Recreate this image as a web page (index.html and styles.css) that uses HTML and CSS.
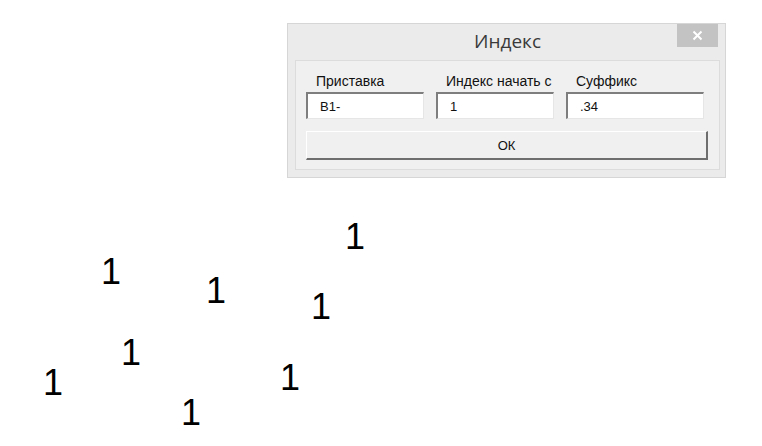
FILE: index.html
```html
<!DOCTYPE html>
<html lang="ru">
<head>
  <meta charset="UTF-8">
  <title>Индекс</title>
  <link rel="stylesheet" href="styles.css">
</head>
<body>
  <div class="sheet">
    <div class="dialog">
      <div class="titlebar">
        <span class="title">Индекс</span>
        <button class="close" title="Закрыть">
          <svg width="11" height="11" viewBox="0 0 11 11">
            <path d="M1.5 1.5 L9.5 9.5 M9.5 1.5 L1.5 9.5" stroke="#fff" stroke-width="2" fill="none"/>
          </svg>
        </button>
      </div>
      <div class="panel">
        <div class="fields">
          <div class="field">
            <label>Приставка</label>
            <input type="text" class="box" value="B1-">
          </div>
          <div class="field">
            <label>Индекс начать с</label>
            <input type="text" class="box" value="1">
          </div>
          <div class="field">
            <label>Суффикс</label>
            <input type="text" class="box" value=".34">
          </div>
        </div>
        <button class="ok">ОК</button>
      </div>
    </div>

    <span class="num" style="left: 345px; top: 219px">1</span>
    <span class="num" style="left: 101px; top: 254px">1</span>
    <span class="num" style="left: 206px; top: 273px">1</span>
    <span class="num" style="left: 311px; top: 289px">1</span>
    <span class="num" style="left: 121px; top: 335px">1</span>
    <span class="num" style="left: 43px; top: 365px">1</span>
    <span class="num" style="left: 280px; top: 360px">1</span>
    <span class="num" style="left: 181px; top: 395px">1</span>
  </div>
</body>
</html>
```

FILE: styles.css
```css
body {
  margin: 0;
  background: #fff;
  font-family: "Liberation Sans", Arial, sans-serif;
}

.sheet {
  position: relative;
  width: 762px;
  height: 446px;
  overflow: hidden;
}

.dialog {
  margin: 23px 0 0 287px;
  width: 439px;
  box-sizing: border-box;
  border: 1px solid #d6d6d6;
  background: #ebebeb;
  padding: 0 5px 7px 7px;
}

.titlebar {
  position: relative;
  height: 36px;
  display: flex;
  align-items: center;
  justify-content: center;
}

.title {
  font-family: "Open Sans", "Noto Sans", sans-serif;
  font-size: 19px;
  color: #3a3a3a;
  margin-top: -2px;
}

.close {
  position: absolute;
  top: 0;
  right: 2px;
  width: 41px;
  height: 23px;
  border: none;
  padding: 0;
  background: #c3c3c3;
  display: flex;
  align-items: center;
  justify-content: center;
}

.panel {
  border: 1px solid #dcdcdc;
  background: #f0f0f0;
  padding: 12px 11px 9px 10px;
}

.fields {
  display: grid;
  grid-template-columns: 118px 118px 138px;
  column-gap: 12px;
}

.field label {
  display: block;
  font-size: 14px;
  line-height: 17px;
  color: #111;
  padding-left: 10px;
  margin-bottom: 2px;
}

.box {
  display: block;
  width: 100%;
  height: 27px;
  box-sizing: border-box;
  margin: 0;
  padding: 0 0 0 12px;
  font-family: "Liberation Sans", Arial, sans-serif;
  font-size: 13px;
  color: #111;
  background: #fff;
  border-style: solid;
  border-width: 2px 1px 1px 2px;
  border-color: #7e7e7e #e6e6e6 #e6e6e6 #7e7e7e;
  outline: none;
}

.ok {
  display: block;
  width: 402px;
  height: 29px;
  margin-top: 12px;
  box-sizing: border-box;
  font-family: "Liberation Sans", Arial, sans-serif;
  font-size: 13px;
  color: #111;
  background: #f0f0f0;
  border-style: solid;
  border-width: 1px 2px 2px 1px;
  border-color: #fff #6e6e6e #6e6e6e #fff;
  padding: 0;
}

.num {
  position: absolute;
  font-family: "Liberation Sans", Arial, sans-serif;
  font-size: 36px;
  line-height: 1;
  color: #000;
}
```
